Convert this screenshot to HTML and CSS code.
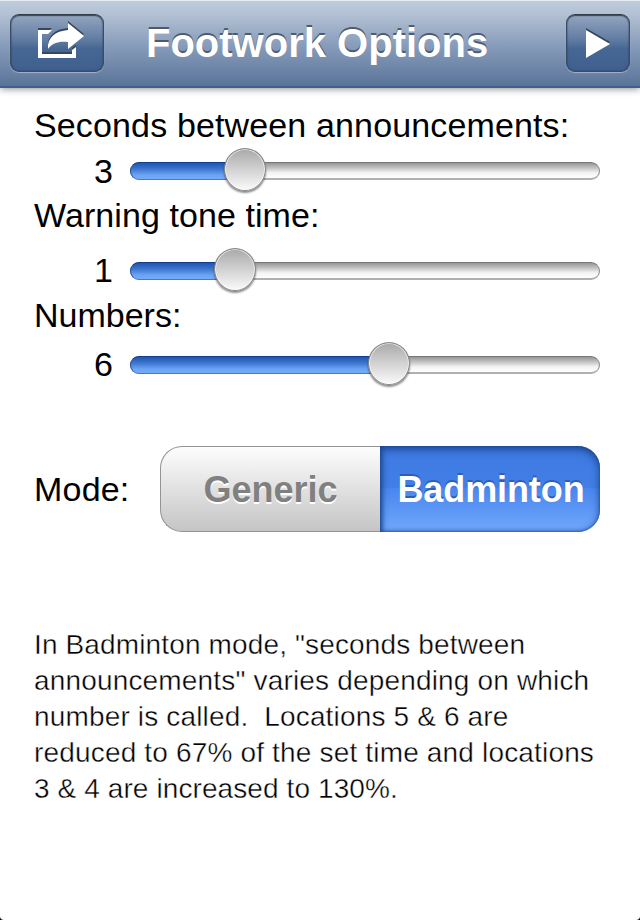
FILE: index.html
```html
<!DOCTYPE html>
<html lang="en">
<head>
<meta charset="utf-8">
<title>Footwork Options</title>
<link rel="stylesheet" href="styles.css">
</head>
<body>
<div class="screen">
  <header class="navbar">
    <button class="nav-button nav-button--share" aria-label="Share">
      <svg class="icon icon--share" width="48" height="42" viewBox="0 0 48 42">
        <g class="icon-shade" transform="translate(0 -2)"><path d="M16 9H2V37H40V26L36 29V33H6V13H12Z"/><path d="M32 2L48 15L32 28V21C23 20 16 22 12 28C11 17 19 10 32 9Z"/></g>
        <g class="icon-face"><path d="M16 9H2V37H40V26L36 29V33H6V13H12Z"/><path d="M32 2L48 15L32 28V21C23 20 16 22 12 28C11 17 19 10 32 9Z"/></g>
        <path class="icon-shade" d="M6 31H36V33H6Z"/>
      </svg>
    </button>
    <h1 class="title">Footwork Options</h1>
    <button class="nav-button nav-button--play" aria-label="Play">
      <svg class="icon icon--play" width="24" height="30" viewBox="0 0 24 30">
        <path class="icon-shade" d="M0 0L24 14L0 28Z"/>
        <path class="icon-face" d="M0 2L24 16L0 30Z"/>
      </svg>
    </button>
  </header>
  <main class="content">
    <div class="label label--seconds">Seconds between announcements:</div>
    <div class="row">
      <span class="value">3</span>
      <div class="slider"><div class="fill" style="width:115px"></div><div class="thumb" style="left:93px"></div></div>
    </div>
    <div class="label label--warning">Warning tone time:</div>
    <div class="row row--warning">
      <span class="value value--raised">1</span>
      <div class="slider"><div class="fill" style="width:105px"></div><div class="thumb" style="left:83px"></div></div>
    </div>
    <div class="label label--numbers">Numbers:</div>
    <div class="row row--numbers">
      <span class="value value--raised">6</span>
      <div class="slider"><div class="fill" style="width:259px"></div><div class="thumb" style="left:237px"></div></div>
    </div>
    <div class="mode">
      <span class="label label--mode">Mode:</span>
      <div class="segments">
        <button class="segment segment--off"><span class="generic">Generic</span></button>
        <button class="segment segment--on"><span class="badminton">Badminton</span></button>
      </div>
    </div>
    <p class="note"><span class="line line--1">In Badminton mode, "seconds between</span>
<span class="line line--2">announcements" varies depending on which</span>
<span class="line line--3">number is called.  Locations 5 &amp; 6 are</span>
<span class="line line--4">reduced to 67% of the set time and locations</span>
<span class="line line--5">3 &amp; 4 are increased to 130%.</span></p>
  </main>
</div>
</body>
</html>
```
FILE: styles.css
```css
* { box-sizing: border-box; }
html { background: #000; }
body { margin: 0; font-family: "Liberation Sans", Arial, sans-serif; color: #000; }
button { font: inherit; padding: 0; margin: 0; border: 0; background: none; }
.screen { width: 640px; height: 920px; background: #fff; border-radius: 0 0 4px 4px; overflow: hidden; }

.navbar {
  display: flex; align-items: flex-start;
  height: 88px; padding: 13px 10px 0;
  border-top: 1px solid #e6ebf1; border-bottom: 2px solid #3f5e8a;
  background: linear-gradient(#bfccdc, #b3c1d4 15%, #8a9ebc 50%, #597499);
  box-shadow: 0 1px 7px rgba(0, 0, 0, .45);
}
.nav-button {
  display: flex; height: 58px; border: 1px solid #3a4b66; border-top-color: #323c4b; border-radius: 9px;
  background: linear-gradient(#94a5bf, #5f7ba2 45%, #466793 60%, #3f608f);
  box-shadow: inset 0 1px 1px #3c485a, inset 0 0 2px rgba(30, 45, 75, .7), 0 1px 1px rgba(255, 255, 255, .4);
}
.nav-button--share { width: 94px; padding: 6px 0 0 25px; }
.nav-button--play { width: 64px; padding: 13px 0 0 19px; margin-left: auto; }
.icon { display: block; overflow: visible; }
.icon-shade { fill: #38465c; }
.icon-face { fill: #fff; }
.title {
  margin: 0 0 0 42px; font-size: 40px; font-weight: bold; line-height: 58px; color: #fff; white-space: nowrap;
  text-shadow: 0 -2px 0 #4e5b6e;
}

.content { padding: 17px 40px 0 35px; }
.label { margin-left: -1px; font-size: 34px; line-height: 40px; white-space: nowrap; }
.label--seconds { letter-spacing: .14px; }
.label--warning { margin-top: 2px; letter-spacing: .08px; }
.label--numbers { margin-top: 2px; }
.label--mode { letter-spacing: .2px; }
.row { display: flex; align-items: center; height: 44px; margin-top: 4px; }
.row--warning { margin-top: 14px; }
.row--numbers { margin-top: 8px; }
.value { width: 95px; padding-right: 17px; font-size: 34px; line-height: 40px; text-align: right; }
.value--raised { padding-bottom: 3px; }
.slider {
  position: relative; flex: 1; height: 18px; border-radius: 9px;
  border: 1px solid #8e8e8e; border-top-color: #777; border-bottom: 2px solid #b0b0b0;
  background: linear-gradient(#969696, #c6c6c6 35%, #f3f3f3 65%, #fff);
}
.fill {
  height: 18px; margin: -1px; border-radius: 9px 0 0 9px;
  border: 1px solid #2556a4; border-top-color: #123e8c; border-bottom-color: #427bcb; border-right: 0;
  background: linear-gradient(#1f56b0, #3f78d0 40%, #6ba4f4 75%, #73acfa);
}
.thumb {
  position: absolute; top: -15px; width: 42px; height: 43px; border-radius: 50%;
  border: 1px solid #858585; background: linear-gradient(#a9a9a9, #cecece 45%, #fafafa);
  box-shadow: inset 0 0 0 1px rgba(255, 255, 255, .65), 0 2px 2px rgba(0, 0, 0, .45);
}

.mode { display: flex; align-items: center; justify-content: space-between; height: 86px; margin-top: 59px; }
.segments { display: flex; width: 440px; height: 86px; }
.segment { width: 220px; font-size: 36px; font-weight: bold; white-space: nowrap; padding-top: 2px; }
.segment--off {
  border: 1px solid #949494; border-right: 0; border-radius: 22px 0 0 22px; color: #808080;
  background: linear-gradient(#fdfdfd, #c5c5c5); text-shadow: 0 2px 0 #fff;
}
.segment--on {
  border-radius: 0 22px 22px 0; color: #fff; text-shadow: 0 -2px 0 #2b60b5;
  background: linear-gradient(#3e7ae2 0, #417ee5 48%, #4a87ee 50%, #71a8fd);
  box-shadow: inset 0 3px 8px #1b438c, inset 2px 0 4px #2556a5, inset 0 0 2px #2356a4;
}
.badminton { padding-left: 2px; letter-spacing: -.1px; }

.note { margin: 95px -20px 0 -1px; font-size: 28px; line-height: 36px; white-space: pre; -webkit-text-stroke: .4px #fff; }
.line--1 { letter-spacing: .14px; }
.line--2 { letter-spacing: .17px; }
.line--3 { letter-spacing: .16px; }
.line--4 { letter-spacing: .17px; }
.line--5 { letter-spacing: .1px; }
```
